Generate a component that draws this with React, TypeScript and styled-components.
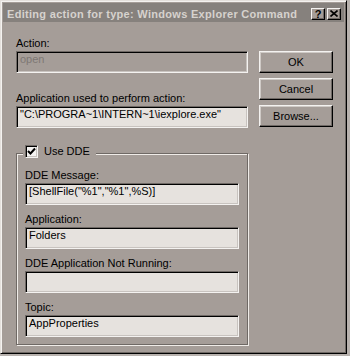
import React from "react";
import styled, { createGlobalStyle } from "styled-components";

const FACE = "#a59d98";
const DARK = "#6f6965";
const LIGHT = "#e4e0dc";
const FIELD = "#e6e2de";

const GlobalStyle = createGlobalStyle`
  html, body { margin: 0; padding: 0; background: #b8b2ae; }
  body { font-family: "Liberation Sans", Arial, sans-serif; font-size: 11px; color: #000; }
  * { box-sizing: border-box; }
`;

const Window = styled.div`
  width: 347px;
  height: 354px;
  background: ${FACE};
  border: 1px solid;
  border-color: ${LIGHT} #000 #000 ${LIGHT};
  box-shadow: inset 1px 1px 0 #f4f2f0, inset -1px -1px 0 ${DARK};
  padding: 2px;
  display: flex;
  flex-direction: column;
`;

const TitleBar = styled.div`
  height: 19px;
  background: #86817d;
  display: flex;
  align-items: center;
  justify-content: space-between;
  padding: 0 3px 0 4px;
`;

const Title = styled.span`
  font-weight: bold;
  font-size: 11px;
  letter-spacing: 0.3px;
  color: #d6d2ce;
  line-height: 13px;
  padding-top: 3px;
  white-space: nowrap;
`;

const CaptionButtons = styled.div`
  display: flex;
  gap: 2px;
  padding-top: 2px;
`;

const CaptionButton = styled.div`
  width: 14px;
  height: 12px;
  background: ${FACE};
  border: 1px solid;
  border-color: #f4f2f0 #000 #000 #f4f2f0;
  box-shadow: inset -1px -1px 0 ${DARK};
  display: flex;
  align-items: center;
  justify-content: center;
  font-weight: bold;
  font-size: 11px;
  line-height: 10px;
  color: #000;
`;

const Body = styled.div`
  display: grid;
  grid-template-columns: 232px 74px;
  column-gap: 11px;
  padding: 15px 0 0 13px;
  align-items: start;
`;

const LeftColumn = styled.div`
  display: flex;
  flex-direction: column;
  gap: 19px;
`;

const Field = styled.div`
  display: flex;
  flex-direction: column;
`;

const Label = styled.div`
  line-height: 13px;
  height: 13px;
  margin-bottom: 1px;
  white-space: nowrap;
`;

const TextBox = styled.div<{ $disabled?: boolean }>`
  height: 22px;
  background: ${(p) => (p.$disabled ? FACE : FIELD)};
  border: 1px solid;
  border-color: ${DARK} #f4f2f0 #f4f2f0 ${DARK};
  box-shadow: inset 1px 1px 0 #000, inset -1px -1px 0 #c8c3bf;
  padding: 1px 3px 0;
  line-height: 13px;
  white-space: nowrap;
  overflow: hidden;
  color: ${(p) => (p.$disabled ? "#7e7874" : "#000")};
`;

const GroupBox = styled.div`
  position: relative;
  margin-top: 6px;
  height: 192px;
  border: 1px solid ${DARK};
  box-shadow: inset 1px 1px 0 #f0ece8, 1px 1px 0 #f0ece8;
  padding: 15px 8px 0 8px;
  display: flex;
  flex-direction: column;
  gap: 8px;
`;

const Legend = styled.div`
  position: absolute;
  top: -9px;
  left: 6px;
  display: flex;
  align-items: center;
  gap: 6px;
  padding: 0 6px 0 2px;
  background: ${FACE};
  height: 13px;
  line-height: 13px;
`;

const CheckBox = styled.div`
  width: 13px;
  height: 13px;
  background: #f4f2f0;
  border: 1px solid;
  border-color: ${DARK} #f4f2f0 #f4f2f0 ${DARK};
  box-shadow: inset 1px 1px 0 #000, inset -1px -1px 0 #c8c3bf;
  display: flex;
  align-items: center;
  justify-content: center;
`;

const RightColumn = styled.div`
  display: flex;
  flex-direction: column;
  gap: 5px;
  padding-top: 14px;
`;

const Button = styled.div`
  height: 22px;
  background: ${FACE};
  border: 1px solid;
  border-color: #f4f2f0 #000 #000 #f4f2f0;
  box-shadow: inset -1px -1px 0 ${DARK}, inset 1px 1px 0 #cfcac6;
  display: flex;
  align-items: center;
  justify-content: center;
  line-height: 13px;
`;

const CheckMark = () => (
  <svg width="9" height="9" viewBox="0 0 9 9">
    <path d="M1 4 L3.5 6.5 L8 1.5" stroke="#000" strokeWidth="2" fill="none" />
  </svg>
);

const CloseGlyph = () => (
  <svg width="8" height="7" viewBox="0 0 8 7">
    <path d="M0.5 0.5 L7.5 6.5 M7.5 0.5 L0.5 6.5" stroke="#000" strokeWidth="1.6" fill="none" />
  </svg>
);

export default function App() {
  return (
    <>
      <GlobalStyle />
      <Window>
        <TitleBar>
          <Title>Editing action for type: Windows Explorer Command</Title>
          <CaptionButtons>
            <CaptionButton>?</CaptionButton>
            <CaptionButton>
              <CloseGlyph />
            </CaptionButton>
          </CaptionButtons>
        </TitleBar>
        <Body>
          <LeftColumn>
            <Field>
              <Label>Action:</Label>
              <TextBox $disabled>open</TextBox>
            </Field>
            <Field>
              <Label>Application used to perform action:</Label>
              <TextBox>"C:\PROGRA~1\INTERN~1\iexplore.exe"</TextBox>
            </Field>
            <GroupBox>
              <Legend>
                <CheckBox>
                  <CheckMark />
                </CheckBox>
                <span>Use DDE</span>
              </Legend>
              <Field>
                <Label>DDE Message:</Label>
                <TextBox>[ShellFile("%1","%1",%S)]</TextBox>
              </Field>
              <Field>
                <Label>Application:</Label>
                <TextBox>Folders</TextBox>
              </Field>
              <Field>
                <Label>DDE Application Not Running:</Label>
                <TextBox></TextBox>
              </Field>
              <Field>
                <Label>Topic:</Label>
                <TextBox>AppProperties</TextBox>
              </Field>
            </GroupBox>
          </LeftColumn>
          <RightColumn>
            <Button>OK</Button>
            <Button>Cancel</Button>
            <Button>Browse...</Button>
          </RightColumn>
        </Body>
      </Window>
    </>
  );
}
